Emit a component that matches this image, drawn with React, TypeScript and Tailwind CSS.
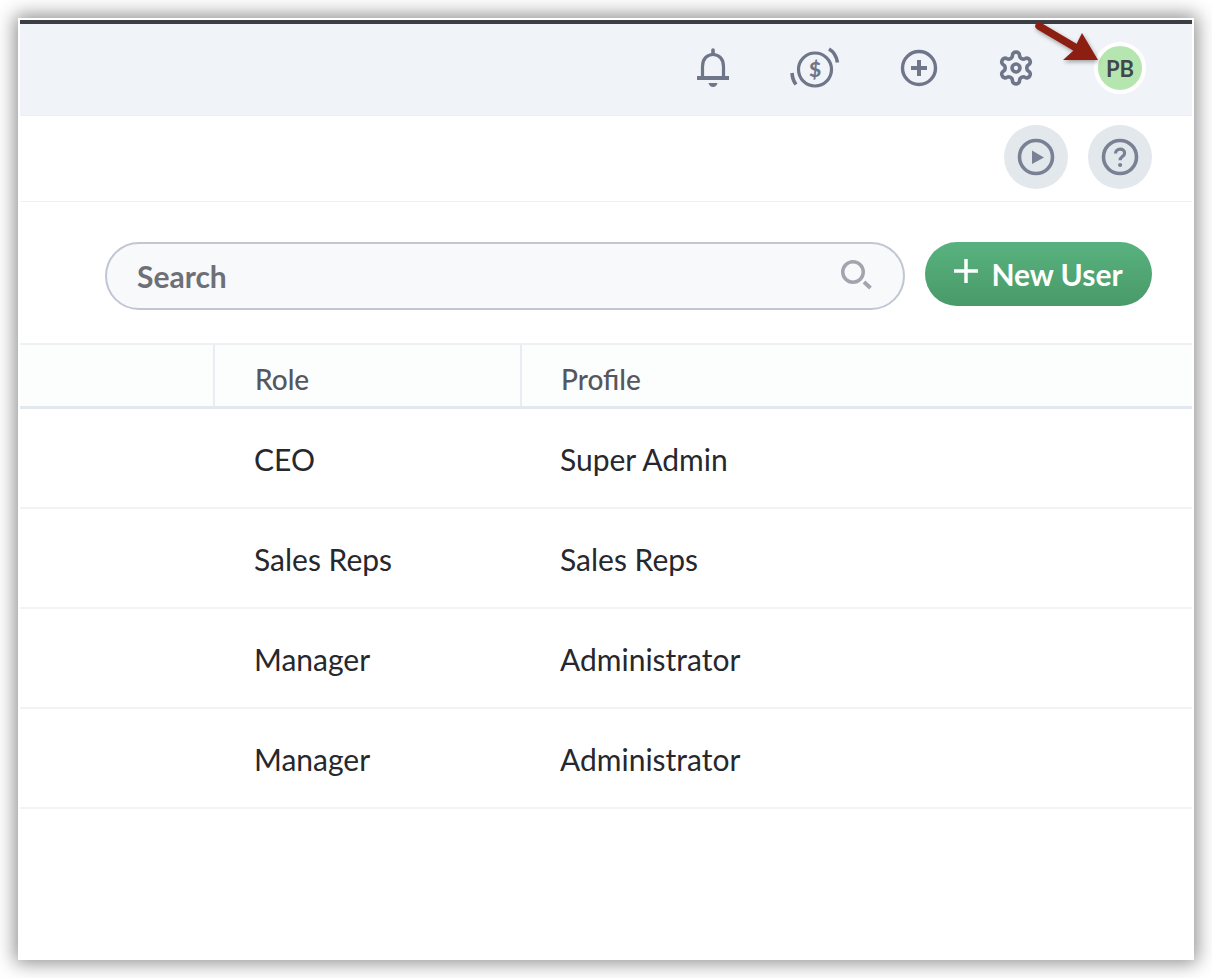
const users = [
  { role: 'CEO', profile: 'Super Admin' },
  { role: 'Sales Reps', profile: 'Sales Reps' },
  { role: 'Manager', profile: 'Administrator' },
  { role: 'Manager', profile: 'Administrator' },
]

function BellIcon() {
  return (
    <svg width="36" height="40" viewBox="0 0 36 40" fill="none" className="text-[#6f7689]">
      <path d="M18 2v4" stroke="currentColor" strokeWidth="3.6" strokeLinecap="round" />
      <path d="M7.5 30V18.5C7.5 11 12 6.5 18 6.5S28.5 11 28.5 18.5V30" stroke="currentColor" strokeWidth="3.2" />
      <path d="M2 30h32" stroke="currentColor" strokeWidth="4" />
      <path d="M13.5 35h9c-.6 2.4-2.4 4-4.5 4s-3.9-1.6-4.5-4z" fill="currentColor" />
    </svg>
  )
}

function DollarIcon() {
  return (
    <svg width="52" height="44" viewBox="0 0 52 44" fill="none" className="text-[#6f7689]">
      <circle cx="26" cy="23.5" r="16.5" stroke="currentColor" strokeWidth="3.2" />
      <path d="M3 27Q3.5 34 7 38.5" stroke="currentColor" strokeWidth="3.6" />
      <path d="M40 3Q47 7 48.5 16.5" stroke="currentColor" strokeWidth="3.6" />
      <text x="26" y="31" textAnchor="middle" fontSize="21" fontWeight="900" fill="currentColor" className="font-['Lato']">$</text>
    </svg>
  )
}

function PlusCircleIcon() {
  return (
    <svg width="38" height="38" viewBox="0 0 38 38" fill="none" className="text-[#6f7689]">
      <circle cx="19" cy="19" r="16.5" stroke="currentColor" strokeWidth="3.4" />
      <path d="M19 11v16M11 19h16" stroke="currentColor" strokeWidth="4" />
    </svg>
  )
}

function GearIcon() {
  return (
    <svg width="38" height="38" viewBox="0 0 24 24" fill="none" stroke="currentColor" strokeWidth="2.3" strokeLinecap="round" strokeLinejoin="round" className="text-[#6f7689]">
      <path d="M12.22 2h-.44a2 2 0 0 0-2 2v.18a2 2 0 0 1-1 1.73l-.43.25a2 2 0 0 1-2 0l-.15-.08a2 2 0 0 0-2.73.73l-.22.38a2 2 0 0 0 .73 2.73l.15.1a2 2 0 0 1 1 1.72v.51a2 2 0 0 1-1 1.74l-.15.09a2 2 0 0 0-.73 2.73l.22.38a2 2 0 0 0 2.73.73l.15-.08a2 2 0 0 1 2 0l.43.25a2 2 0 0 1 1 1.73V20a2 2 0 0 0 2 2h.44a2 2 0 0 0 2-2v-.18a2 2 0 0 1 1-1.73l.43-.25a2 2 0 0 1 2 0l.15.08a2 2 0 0 0 2.73-.73l.22-.39a2 2 0 0 0-.73-2.73l-.15-.08a2 2 0 0 1-1-1.74v-.5a2 2 0 0 1 1-1.74l.15-.09a2 2 0 0 0 .73-2.73l-.22-.38a2 2 0 0 0-2.73-.73l-.15.08a2 2 0 0 1-2 0l-.43-.25a2 2 0 0 1-1-1.73V4a2 2 0 0 0-2-2z" />
      <circle cx="12" cy="12" r="2.5" />
    </svg>
  )
}

function PlayIcon() {
  return (
    <svg width="38" height="38" viewBox="0 0 38 38" fill="none" className="text-[#7a8194]">
      <circle cx="19" cy="19" r="16.5" stroke="currentColor" strokeWidth="3.6" />
      <path d="M15 12.5L27 19.5 15 26z" fill="currentColor" />
    </svg>
  )
}

function HelpIcon() {
  return (
    <svg width="38" height="38" viewBox="0 0 38 38" fill="none" className="text-[#7a8194]">
      <circle cx="19" cy="19" r="16.5" stroke="currentColor" strokeWidth="3.6" />
      <path d="M14.5 15.5c0-2.7 2-4.3 4.6-4.3s4.500 1.600 4.500 4c0 3.400-4.500 3.400-4.500 7" stroke="currentColor" strokeWidth="3.2" />
      <circle cx="19.1" cy="27" r="2.1" fill="currentColor" />
    </svg>
  )
}

function SearchIcon() {
  return (
    <svg width="34" height="34" viewBox="0 0 34 34" fill="none" className="text-[#a2a5ae]">
      <circle cx="14" cy="13" r="10.25" stroke="currentColor" strokeWidth="3.5" />
      <path d="M25 23l6.5 6" stroke="currentColor" strokeWidth="3.8" />
    </svg>
  )
}

function Arrow() {
  return (
    <svg width="92" height="62" viewBox="0 0 92 62" fill="none" className="absolute left-[1030px] top-[18px] drop-shadow-[1px_2px_2px_rgba(0,0,0,0.35)]">
      <path d="M9 8L48 31" stroke="#8c1f12" strokeWidth="7.5" strokeLinecap="round" />
      <path d="M52 15L68 42L33 42L43 33z" fill="#8c1f12" />
    </svg>
  )
}

export default function App() {
  return (
    <div className="relative flex h-[978px] w-[1212px] overflow-hidden bg-white pt-[18px] pr-[18px] pb-[18px] pl-[18px] font-['Lato',sans-serif]">
      <div className="flex w-full flex-col border-2 border-b-0 border-white bg-white shadow-[0_0_18px_3px_rgba(0,0,0,0.45)]">
        <div className="h-1 shrink-0 bg-[#3b3e45]" />

        <div className="flex h-[92px] shrink-0 items-center border-b border-[#eceff3] bg-[#f0f3f7] pb-[3px]">
          <div className="ml-[675px] flex w-9 justify-center"><BellIcon /></div>
          <div className="ml-[58px] flex w-[52px] justify-center"><DollarIcon /></div>
          <div className="ml-[59px] flex w-[38px] justify-center"><PlusCircleIcon /></div>
          <div className="ml-[59px] flex w-[38px] justify-center"><GearIcon /></div>
          <div className="ml-[59px] flex h-[52px] w-[52px] items-center justify-center rounded-full border-[4px] border-white bg-[#b6e6b0] text-[22px] font-bold text-[#43464d]">
            PB
          </div>
        </div>

        <div className="flex h-[86px] shrink-0 items-center justify-end gap-5 border-b border-[#eef0f3] pr-10 pb-1">
          <button type="button" className="flex h-16 w-16 items-center justify-center rounded-full bg-[#e3e8ec]">
            <PlayIcon />
          </button>
          <button type="button" className="flex h-16 w-16 items-center justify-center rounded-full bg-[#e3e8ec]">
            <HelpIcon />
          </button>
        </div>

        <div className="flex h-[143px] shrink-0 items-start justify-end gap-5 border-b-2 border-[#eef0f3] pt-10 pr-10">
          <div className="flex h-[68px] w-[800px] items-center justify-between rounded-[34px] border-2 border-[#c0c6d3] bg-[#f8f9fb] pr-[30px] pl-[30px]">
            <span className="text-[30px] font-bold text-[#6e7077]">Search</span>
            <SearchIcon />
          </div>
          <button type="button" className="flex h-16 w-[227px] items-center justify-center gap-[13px] rounded-[32px] bg-gradient-to-b from-[#58b27f] to-[#499a68] text-[30px] font-bold text-white">
            <svg width="24" height="26" viewBox="0 0 24 26" fill="none" className="mb-[6px]">
              <path d="M12 1v24M0 13h24" stroke="currentColor" strokeWidth="3.5" />
            </svg>
            New User
          </button>
        </div>

        <div className="grid h-[64px] shrink-0 grid-cols-[195px_307px_1fr] border-b-[3px] border-[#e3e8ef] bg-[#fcfdfd] text-[28px] font-medium text-[#55575e]">
          <div className="border-r-2 border-[#e9edf2]" />
          <div className="flex items-center border-r-2 border-[#e9edf2] pt-[7px] pl-10">Role</div>
          <div className="flex items-center pt-[7px] pl-[39px]">Profile</div>
        </div>

        {users.map((user, i) => (
          <div key={i} className="grid h-[100px] shrink-0 grid-cols-[234px_306px_1fr] items-center border-b-2 border-[#f1f3f5] pt-0.5 text-[30px] text-[#26282d]">
            <div />
            <div>{user.role}</div>
            <div>{user.profile}</div>
          </div>
        ))}
      </div>
      <Arrow />
    </div>
  )
}
